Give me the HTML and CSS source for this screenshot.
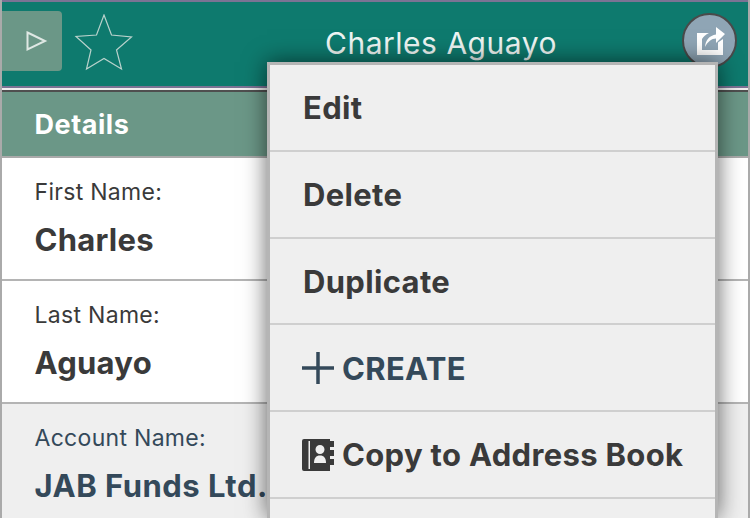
FILE: index.html
```html
<!DOCTYPE html>
<html lang="en">
<head>
  <meta charset="UTF-8" />
  <title>Charles Aguayo</title>
  <link rel="stylesheet" href="styles.css">
</head>
<body>

  <header class="topbar">
    <button class="play-btn">
      <svg width="24" height="24" viewBox="0 0 24 24"><path d="M3.500 3.500 L21 12 L3.500 20.500 Z" fill="none" stroke="#dfe8e4" stroke-width="2"/></svg>
    </button>
    <svg class="star" width="60" height="58" viewBox="0 0 60 58"><path d="M30 1 L37.500 21 L57.500 23 L42.500 36 L47.500 55 L30 44.500 L12.500 55 L17 36 L2 22.500 L22.500 21 Z" fill="none" stroke="#b9d2cc" stroke-width="1.200"/></svg>
    <h1>Charles Aguayo</h1>
    <button class="share-btn">
      <svg width="28" height="28" viewBox="0 0 28 28"><path d="M0 6 H12 C8.500 7.500 6.500 9.500 5 12 V23 H21 V15.500 L26 12 V28 H0 Z" fill="#fff"/><path d="M8 20 C8.500 13 12.500 8.500 19 7.500 V0 L28 7 L19 16 V11.500 C14.500 11.500 11 14.500 8 20 Z" fill="#fff"/></svg>
    </button>
  </header>

  <section class="details">
    <h2>Details</h2>
    <div class="field">
      <label>First Name:</label>
      <p>Charles</p>
    </div>
    <div class="field">
      <label>Last Name:</label>
      <p>Aguayo</p>
    </div>
    <div class="field link">
      <label>Account Name:</label>
      <p>JAB Funds Ltd.</p>
    </div>
  </section>

  <div class="menu">
    <div class="menu-item">Edit</div>
    <div class="menu-item">Delete</div>
    <div class="menu-item">Duplicate</div>
    <div class="menu-item create">
      <svg width="32" height="32" viewBox="0 0 32 32"><path d="M0 16 H32 M16 0 V32" stroke="#34495a" stroke-width="3.500" fill="none"/></svg>
      CREATE
    </div>
    <div class="menu-item">
      <svg width="32" height="32" viewBox="0 0 32 32"><path fill-rule="evenodd" d="M2 0 H28 V2 H32 V8 H28 V11 H32 V17 H28 V20 H32 V26 H28 V32 H2 A2 2 0 0 1 0 30 V2 A2 2 0 0 1 2 0 Z M6.500 2 V30 H8 V2 Z M18 6 A4.500 4.500 0 1 0 18 15 A4.500 4.500 0 1 0 18 6 Z M12 24 C12 19 14 16.500 18 16.500 C22 16.500 24 19 24 24 Z" fill="#3a3a3a"/></svg>
      Copy to Address Book
    </div>
    <div class="menu-item last"></div>
  </div>

</body>
</html>
```

FILE: styles.css
```css
html, body {
  margin: 0;
  height: 100%;
  overflow: hidden;
}
body {
  font-family: Inter, "Noto Sans", sans-serif;
  background: #efefef;
  color: #3a3a3a;
  position: relative;
  border-left: 2px solid #aaa;
  border-right: 2px solid #aaa;
  box-sizing: border-box;
}
.topbar {
  height: 88px;
  box-sizing: border-box;
  margin: 0 -2px;
  background: #0e7a6e;
  border: 2px solid #7b7394;
  display: flex;
  align-items: center;
  position: relative;
}
.topbar h1 {
  flex: 1;
  margin: -2px 0 0;
  text-align: center;
  font-size: 30px;
  font-weight: 400;
  line-height: 36px;
  letter-spacing: 0.5px;
  color: #eef5f3;
}
.play-btn {
  width: 60px;
  height: 60px;
  border: none;
  padding: 0 0 0 22px;
  background: #6b9787;
  border-radius: 0 4px 4px 0;
  display: flex;
  align-items: center;
  margin-top: -6px;
}
.star {
  margin-left: 12px;
  margin-top: -2px;
}
.share-btn {
  position: absolute;
  right: 11px;
  top: 11px;
  width: 55px;
  height: 55px;
  border-radius: 50%;
  border: 2px solid #4a4a4a;
  background: #8fa5b5;
  padding: 0 0 0 2px;
  box-sizing: border-box;
  display: flex;
  align-items: center;
  justify-content: center;
}
.details {
  background: #bbb;
}
.details h2 {
  margin: 2px 0 0;
  height: 68px;
  box-sizing: border-box;
  border-top: 2px solid #4f4f4f;
  border-bottom: 2px solid #aaa;
  background: #6b9787;
  color: #fff;
  font-size: 27px;
  font-weight: 700;
  letter-spacing: 0.55px;
  padding: 15px 0 0 32.500px;
  line-height: 36px;
}
.field {
  height: 123px;
  box-sizing: border-box;
  background: #fff;
  border-bottom: 2px solid #b4b4b4;
  padding: 19px 0 0 32.500px;
}
.field label {
  display: block;
  font-size: 23px;
  line-height: 30px;
  letter-spacing: 0.3px;
}
.field p {
  margin: 14px 0 0;
  font-size: 31px;
  font-weight: 700;
  line-height: 38px;
  letter-spacing: 0.25px;
}
.field.link {
  background: #efefef;
  color: #34495a;
}
.field.link p {
  letter-spacing: 0.5px;
}
.menu {
  position: absolute;
  left: 265px;
  top: 62px;
  width: 451px;
  height: 456px;
  box-sizing: border-box;
  background: #efefef;
  border: 3px solid #b5b5b5;
  border-bottom: none;
  box-shadow: 0 0 22px rgba(0,0,0,0.6);
}
.menu-item {
  height: 86.800px;
  box-sizing: border-box;
  border-bottom: 2px solid #cfcfcf;
  padding: 0.500px 0 0 33px;
  display: flex;
  align-items: center;
  gap: 8px;
  font-size: 31px;
  font-weight: 700;
  letter-spacing: 0.33px;
}
.menu-item svg {
  margin-left: -1px;
}
.menu-item.create {
  color: #34495a;
}
.menu-item.last {
  height: 19px;
  border-bottom: none;
}
```
